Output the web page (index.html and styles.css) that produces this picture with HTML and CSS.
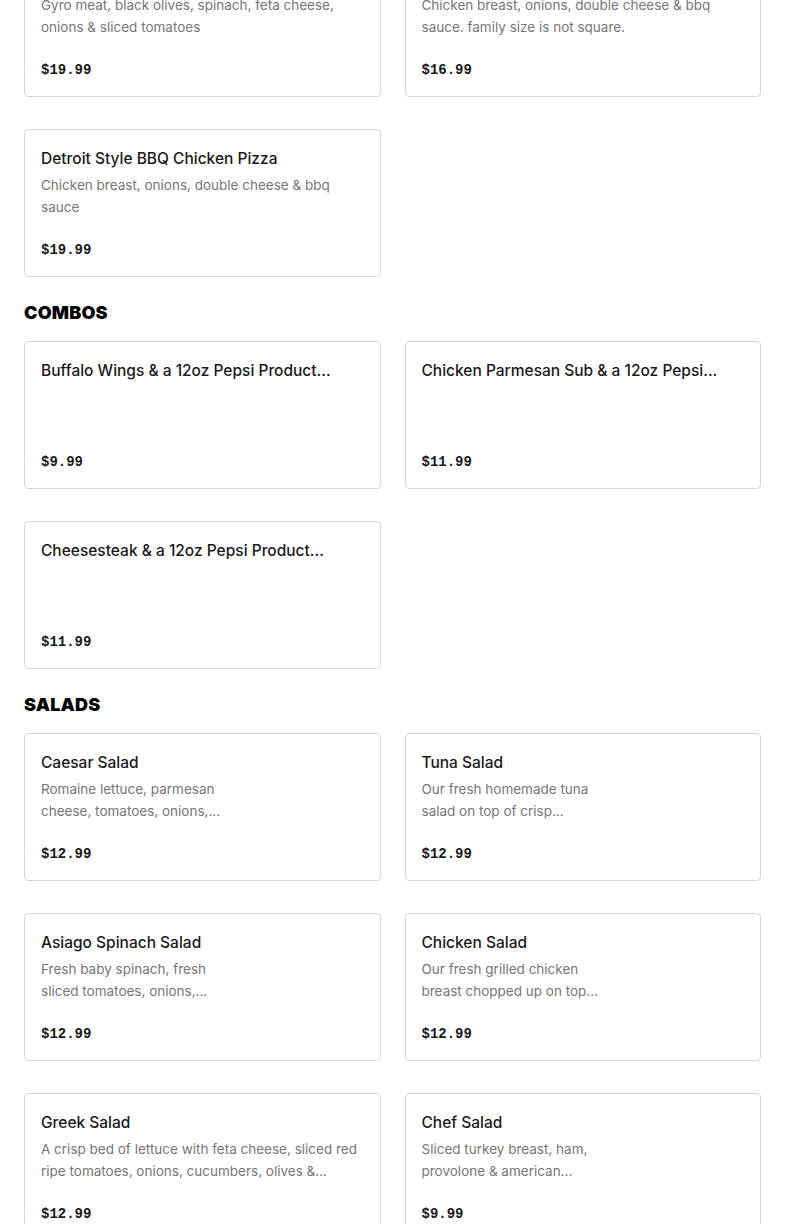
FILE: index.html
```html
<!DOCTYPE html>
<html lang="en">
<head>
<meta charset="utf-8">
<title>Menu</title>
<link rel="stylesheet" href="styles.css">
</head>
<body>
<main class="menu">
  <section class="section section--first">
    <div class="grid">
      <article class="card">
        <h3 class="card__title">Detroit Style Gyro Pizza</h3>
        <p class="card__desc">Gyro meat, black olives, spinach, feta cheese, onions &amp; sliced tomatoes</p>
        <div class="card__price">$19.99</div>
      </article>
      <article class="card">
        <h3 class="card__title">Family BBQ Chicken Pizza</h3>
        <p class="card__desc">Chicken breast, onions, double cheese &amp; bbq sauce. family size is not square.</p>
        <div class="card__price">$16.99</div>
      </article>
      <article class="card">
        <h3 class="card__title">Detroit Style BBQ Chicken Pizza</h3>
        <p class="card__desc">Chicken breast, onions, double cheese &amp; bbq sauce</p>
        <div class="card__price">$19.99</div>
      </article>
    </div>
  </section>

  <section class="section">
    <h2 class="section__title">COMBOS</h2>
    <div class="grid">
      <article class="card">
        <h3 class="card__title">Buffalo Wings &amp; a 12oz Pepsi Product...</h3>
        <div class="card__price">$9.99</div>
      </article>
      <article class="card">
        <h3 class="card__title">Chicken Parmesan Sub &amp; a 12oz Pepsi...</h3>
        <div class="card__price">$11.99</div>
      </article>
      <article class="card">
        <h3 class="card__title">Cheesesteak &amp; a 12oz Pepsi Product...</h3>
        <div class="card__price">$11.99</div>
      </article>
    </div>
  </section>

  <section class="section">
    <h2 class="section__title">SALADS</h2>
    <div class="grid">
      <article class="card">
        <h3 class="card__title">Caesar Salad</h3>
        <p class="card__desc card__desc--narrow">Romaine lettuce, parmesan cheese, tomatoes, onions,...</p>
        <div class="card__price">$12.99</div>
      </article>
      <article class="card">
        <h3 class="card__title">Tuna Salad</h3>
        <p class="card__desc card__desc--narrow">Our fresh homemade tuna salad on top of crisp...</p>
        <div class="card__price">$12.99</div>
      </article>
      <article class="card">
        <h3 class="card__title">Asiago Spinach Salad</h3>
        <p class="card__desc card__desc--narrow">Fresh baby spinach, fresh sliced tomatoes, onions,...</p>
        <div class="card__price">$12.99</div>
      </article>
      <article class="card">
        <h3 class="card__title">Chicken Salad</h3>
        <p class="card__desc card__desc--narrow">Our fresh grilled chicken breast chopped up on top...</p>
        <div class="card__price">$12.99</div>
      </article>
      <article class="card">
        <h3 class="card__title">Greek Salad</h3>
        <p class="card__desc">A crisp bed of lettuce with feta cheese, sliced red ripe tomatoes, onions, cucumbers, olives &amp;...</p>
        <div class="card__price">$12.99</div>
      </article>
      <article class="card">
        <h3 class="card__title">Chef Salad</h3>
        <p class="card__desc card__desc--narrow">Sliced turkey breast, ham, provolone &amp; american...</p>
        <div class="card__price">$9.99</div>
      </article>
    </div>
  </section>
</main>
</body>
</html>
```

FILE: styles.css
```css
* { box-sizing: border-box; }

html, body {
  margin: 0;
  padding: 0;
  background: #ffffff;
}

body {
  font-family: Inter, "Noto Sans", "Liberation Sans", sans-serif;
  color: #191919;
  overflow: hidden;
}

.menu {
  padding: 0 24px;
  margin-top: -51px;
}

.section + .section {
  margin-top: 24px;
}

.section__title {
  margin: 0 0 16px;
  font-size: 18px;
  line-height: 24px;
  font-weight: 900;
  letter-spacing: 0.2px;
  color: #000000;
}

.grid {
  display: grid;
  grid-template-columns: minmax(0, 1fr) minmax(0, 1fr);
  column-gap: 24px;
  row-gap: 32px;
}

.card {
  display: flex;
  flex-direction: column;
  min-width: 0;
  height: 148px;
  padding: 16px;
  border: 1px solid #d6d6d6;
  border-radius: 4px;
  background: #ffffff;
}

.card__title {
  margin: 1px 0 0;
  font-size: 15.5px;
  line-height: 24px;
  font-weight: 500;
  color: #191919;
  white-space: nowrap;
  overflow: hidden;
  text-overflow: ellipsis;
}

.card__desc {
  margin: 3px 0 0;
  font-size: 13.5px;
  line-height: 22px;
  color: #767676;
  display: -webkit-box;
  -webkit-box-orient: vertical;
  -webkit-line-clamp: 2;
  overflow: hidden;
}

.card__desc--narrow {
  max-width: 192px;
}

.card__price {
  margin-top: auto;
  font-family: "Liberation Mono", "DejaVu Sans Mono", monospace;
  font-size: 14px;
  line-height: 20px;
  font-weight: 700;
  color: #191919;
}
```
